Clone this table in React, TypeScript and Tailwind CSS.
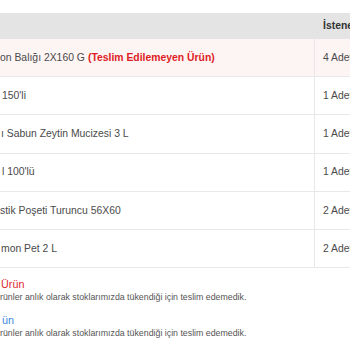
const rows = [
  { name: "on Balığı 2X160 G", qty: "4 Adet", pad: "pl-0", missing: true },
  { name: "150'li", qty: "1 Adet", pad: "pl-[2px]" },
  { name: "ı Sabun Zeytin Mucizesi 3 L", qty: "1 Adet", pad: "pl-[1px]" },
  { name: "l 100'lü", qty: "1 Adet", pad: "pl-[2px]" },
  { name: "stik Poşeti Turuncu 56X60", qty: "2 Adet", pad: "pl-0" },
  { name: "mon Pet 2 L", qty: "2 Adet", pad: "pl-[1px]" },
];

export default function App() {
  return (
    <div className="w-[350px] h-[350px] overflow-hidden bg-white font-['Liberation_Sans',Arial,sans-serif] text-[#4a4a4a]">
      {/* table */}
      <div className="w-[420px] pt-[13px]">
        <div className="flex h-[26px] items-center bg-[#e4e4e4]">
          <div className="w-[315px]" />
          <div className="pl-[8px] text-[10.4px] font-bold text-[#333] whitespace-nowrap">İstenen Miktar</div>
        </div>
        {rows.map((r) => (
          <div
            key={r.name}
            className={`flex h-[38.2px] border-b border-[#e8e8e8] ${r.missing ? "bg-[#fdf4f4]" : "bg-white"}`}
          >
            <div className={`flex w-[315px] items-center border-r border-[#e8e8e8] text-[10.4px] whitespace-nowrap ${r.pad}`}>
              <span>{r.name}</span>
              {r.missing && (
                <span className="ml-[3px] font-bold text-[#dd1c24]">(Teslim Edilemeyen Ürün)</span>
              )}
            </div>
            <div className="flex items-center pl-[8px] text-[10.4px] whitespace-nowrap">{r.qty}</div>
          </div>
        ))}
      </div>

      {/* legend */}
      <div className="mt-[10px]">
        <p className="pl-[1px] text-[10.8px] leading-[13px] text-[#e02a30]">Ürün</p>
        <p className="text-[8.8px] leading-[12px] text-[#555] whitespace-nowrap">
          rünler anlık olarak stoklarımızda tükendiği için teslim edemedik.
        </p>
        <p className="mt-[11px] pl-[2px] text-[10.8px] leading-[13px] text-[#3d8ae0]">ün</p>
        <p className="text-[8.8px] leading-[12px] text-[#555] whitespace-nowrap">
          rünler anlık olarak stoklarımızda tükendiği için teslim edemedik.
        </p>
      </div>
    </div>
  );
}
